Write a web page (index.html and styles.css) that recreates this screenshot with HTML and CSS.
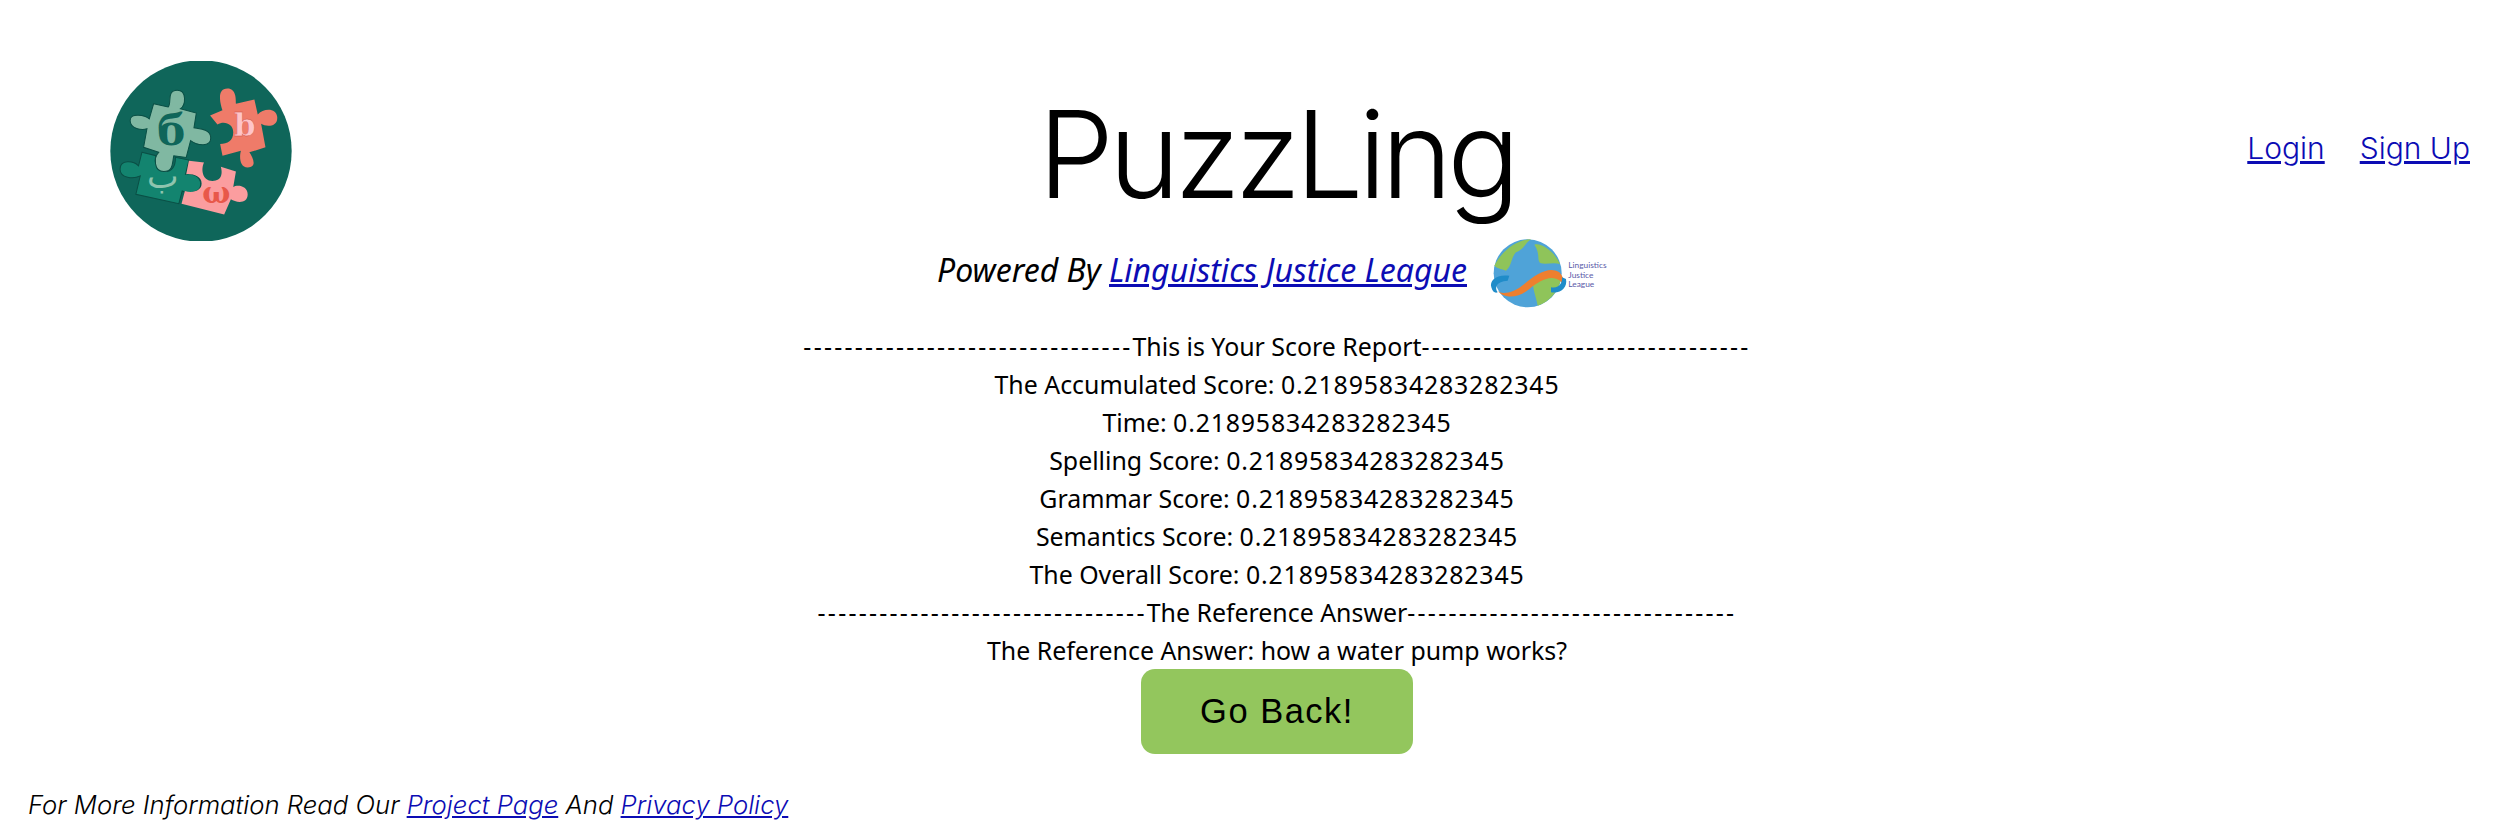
FILE: index.html
```html
<!DOCTYPE html>
<html>
<head>
<meta charset="utf-8">
<title>PuzzLing</title>
<link rel="stylesheet" href="styles.css">
</head>
<body>
<header class="top">
    <div class="logo-box">
        <svg class="logo" viewBox="95 65 542 532">
            <circle cx="366" cy="331" r="270" fill="#0f665a"/>
            <path d="M190 335 L232 345 C225 365 235 392 258 392 C285 392 290 370 290 350 L330 358 L320 400 C335 395 365 405 365 430 C365 455 330 460 310 450 L300 488 L172 460 L185 405 C165 415 125 412 125 385 C125 355 165 360 180 375 Z" fill="#13846f" stroke="#0a4f45" stroke-width="3"/>
            <path d="M330 360 L375 365 C365 385 370 420 400 420 C430 420 430 395 425 378 L470 392 L462 438 C475 430 505 435 505 460 C505 490 470 485 455 475 L435 520 L308 488 L318 450 C340 458 368 450 368 428 C368 405 340 398 322 400 Z" fill="#fb9d9f"/>
            <path d="M225 190 L268 200 C280 190 262 150 295 150 C325 150 320 195 305 205 L352 218 L345 262 C360 265 395 265 395 292 C395 320 355 315 335 300 L322 350 L285 345 C280 365 285 392 255 392 C225 392 225 350 240 335 L195 320 L205 265 C190 270 155 265 155 240 C155 215 200 225 212 235 Z" fill="#80b8a2" stroke="#0a4f45" stroke-width="3"/>
            <path d="M445 145 C470 145 470 175 470 190 L525 178 L535 222 C550 205 590 200 593 230 C595 260 560 260 545 250 L558 320 L510 335 C520 350 535 380 505 380 C480 380 480 345 485 330 L430 345 L423 310 C445 310 462 300 462 275 C462 250 435 240 415 252 L393 225 L430 210 C425 195 410 145 445 145 Z" fill="#ef7b69"/>
            <text class="logo-letter" x="236" y="314" font-size="125" fill="#0f665a">б</text>
            <text class="logo-letter" x="464" y="285" font-size="92" fill="#ffc4c8" stroke="#c9483c" stroke-width="1">b</text>
            <text class="logo-letter" x="370" y="485" font-size="88" fill="#e8584a">ω</text>
            <text class="logo-arabic" x="205" y="440" font-size="100" fill="#8fc4ae">ب</text>
        </svg>
    </div>
    <h1 class="title">PuzzLing</h1>
    <nav class="auth">
        <a href="#">Login</a>
        <a href="#">Sign Up</a>
    </nav>
</header>

<div class="powered">
    <em class="powered-text">Powered By <a href="#">Linguistics Justice League</a></em>
    <svg class="globe" viewBox="100 30 378 228">
        <circle cx="225" cy="148" r="102" fill="#4fa3d8"/>
        <path d="M125 125 C150 75 200 45 235 46 C215 60 215 75 190 85 C175 100 178 125 160 140 C150 135 135 135 125 125 Z" fill="#8fc45a"/>
        <path d="M245 62 C270 55 310 90 322 120 C300 115 280 122 265 118 C250 110 265 90 245 62 Z" fill="#8fc45a"/>
        <path d="M240 165 C270 150 310 150 325 165 C318 200 290 235 255 245 C250 215 240 200 240 165 Z" fill="#8fc45a"/>
        <path d="M130 195 C140 215 180 210 215 180 C250 150 290 125 320 145 C330 155 335 170 335 185 L322 170 C295 150 260 170 230 195 C195 225 150 225 130 195 Z" fill="#ee7f2f"/>
        <path d="M170 155 C130 150 110 170 116 190 C120 205 128 208 135 205 C125 190 130 172 165 170 Z" fill="#1f8cc9"/>
        <path d="M295 190 C320 195 330 175 328 160 L340 165 C345 190 325 210 295 205 Z" fill="#1f8cc9"/>
        <text class="globe-text" x="347" y="132">Linguistics</text>
        <text class="globe-text" x="347" y="161">Justice</text>
        <text class="globe-text" x="347" y="189">League</text>
    </svg>
</div>

<main class="report">
    <p><span class="dashes">--------------------------------</span>This is Your Score Report<span class="dashes">--------------------------------</span></p>
    <p>The Accumulated Score: <span class="num">0.21895834283282345</span></p>
    <p>Time: <span class="num">0.21895834283282345</span></p>
    <p>Spelling Score: <span class="num">0.21895834283282345</span></p>
    <p>Grammar Score: <span class="num">0.21895834283282345</span></p>
    <p>Semantics Score: <span class="num">0.21895834283282345</span></p>
    <p>The Overall Score: <span class="num">0.21895834283282345</span></p>
    <p><span class="dashes">--------------------------------</span>The Reference Answer<span class="dashes">--------------------------------</span></p>
    <p>The Reference Answer: how a water pump works?</p>
    <button class="back">Go Back!</button>
</main>

<footer class="foot">
    <em>For More Information Read Our <a href="#">Project Page</a> And <a href="#">Privacy Policy</a></em>
</footer>
</body>
</html>
```

FILE: styles.css
```css
html, body {
    margin: 0;
    background: #fff;
    color: #000;
}

body {
    font-family: "Noto Sans", sans-serif;
    height: 828px;
    overflow: hidden;
}

a {
    color: #0c0cb4;
}

.top {
    display: grid;
    grid-template-columns: 928px auto 1fr;
    align-items: start;
    padding: 61px 47px 0 110px;
}

.logo {
    display: block;
    width: 182px;
    height: 180px;
}

.logo-letter {
    font-family: "DejaVu Serif", serif;
    font-weight: bold;
}

.logo-arabic {
    font-family: "DejaVu Sans", sans-serif;
}

.title {
    margin: 20px 0 -12px;
    font-family: "Inter", sans-serif;
    font-weight: 300;
    font-size: 121px;
    line-height: 146px;
    letter-spacing: -5.3px;
}

.auth {
    display: flex;
    justify-content: flex-end;
    gap: 35px;
    font-size: 30px;
    font-family: "Inter", sans-serif;
    font-weight: 300;
    padding-top: 69px;
}

.powered {
    display: flex;
    justify-content: center;
    align-items: center;
    gap: 19px;
    height: 76px;
    margin-top: -7px;
    padding-left: 32px;
    font-size: 32px;
}

.powered-text {
    margin-bottom: 6px;
}

.globe {
    width: 126px;
    height: 76px;
}

.globe-text {
    font-family: "Lato", sans-serif;
    font-size: 25px;
    fill: #5a5aa8;
}

.report {
    display: flex;
    flex-direction: column;
    align-items: center;
    margin-top: 17px;
    padding-left: 37px;
    font-size: 24.9px;
}

.report p {
    margin: 0;
    line-height: 38px;
}

.dashes {
    letter-spacing: 2.27px;
}

.num {
    letter-spacing: 0.82px;
}

.back {
    width: 272px;
    height: 85px;
    background: #93c65d;
    border: none;
    border-radius: 14px;
    font-family: "Liberation Sans", sans-serif;
    font-size: 34.5px;
    letter-spacing: 1.5px;
    color: #000;
}

.foot {
    padding: 35px 0 0 28px;
    font-family: "Inter", sans-serif;
    font-weight: 300;
    font-size: 25.7px;
}
```
